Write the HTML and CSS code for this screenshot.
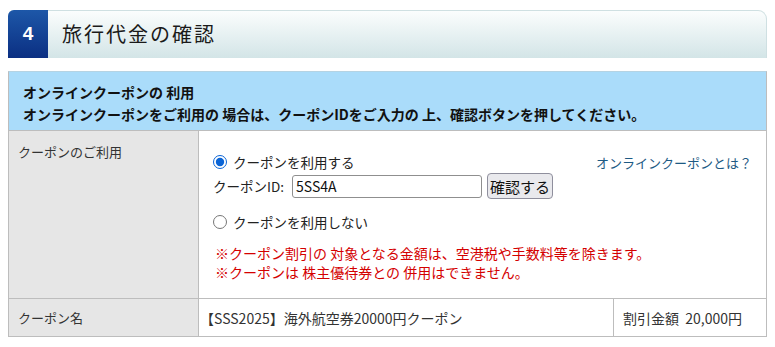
FILE: index.html
```html
<!DOCTYPE html>
<html lang="ja">
<head>
<meta charset="utf-8">
<link rel="stylesheet" href="styles.css">
</head>
<body>
<div class="sec-head">
  <div class="sec-num">4</div>
  <div class="sec-title">旅行代金の確認</div>
</div>
<div class="panel">
  <div class="notice">
    <div>オンラインクーポンの 利用</div>
    <div>オンラインクーポンをご利用の 場合は、クーポンIDをご入力の 上、確認ボタンを押してください。</div>
  </div>
  <div class="row row-use">
    <div class="label">クーポンのご利用</div>
    <div class="body">
      <div class="line-top">
        <label class="radio"><input type="radio" name="c" checked> クーポンを利用する</label>
        <a class="help" href="#">オンラインクーポンとは？</a>
      </div>
      <div class="id-line">
        <span class="id-label">クーポンID:</span>
        <input class="id-input" type="text" value="5SS4A">
        <button class="confirm">確認する</button>
      </div>
      <label class="radio radio2"><input type="radio" name="c"> クーポンを利用しない</label>
      <div class="notes">
        <div>※クーポン割引の 対象となる金額は、空港税や手数料等を除きます。</div>
        <div>※クーポンは 株主優待券との 併用はできません。</div>
      </div>
    </div>
  </div>
  <div class="row row-name">
    <div class="label">クーポン名</div>
    <div class="name">【SSS2025】海外航空券20000円クーポン</div>
    <div class="amount">割引金額&nbsp;&nbsp;20,000円</div>
  </div>
</div>
</body>
</html>
```
FILE: styles.css
```css
* { box-sizing: border-box; }
body {
  margin: 10px 8px 0 8px;
  font-family: "Noto Sans CJK JP", "Noto Sans", sans-serif;
  color: #222;
  background: #fff;
}
.sec-head {
  display: flex;
  height: 48px;
  width: 759px;
  border: 1px solid #cfe0e2;
  border-left: none;
  border-bottom: none;
  border-radius: 6px 9px 0 0;
  background: linear-gradient(#fbfdfd, #d3e5e7);
}
.sec-num {
  width: 40px;
  margin-top: -1px;
  height: 48px;
  background: linear-gradient(#1d57a8, #0b2f82);
  border-radius: 6px 0 0 0;
  color: #fff;
  font-family: "Liberation Sans", Arial, sans-serif;
  font-weight: bold;
  font-size: 19px;
  display: flex;
  align-items: center;
  justify-content: center;
}
.sec-title {
  padding-left: 14px;
  font-size: 20px;
  line-height: 46px;
  letter-spacing: 2px;
  color: #1a1a1a;
}
.panel {
  margin-top: 13px;
  width: 759px;
  border: 1px solid #bdbdbd;
  border-top-color: #b5d3e3;
}
.notice {
  background: #aadcfa;
  border-bottom: 1px solid #bdbdbd;
  padding: 9px 14px 0 14px;
  height: 59px;
  font-size: 14px;
  font-weight: bold;
  line-height: 22px;
  color: #111;
}
.row {
  display: flex;
}
.label {
  width: 190px;
  flex: none;
  background: #e6e6e6;
  border-right: 1px solid #bdbdbd;
  padding-left: 9px;
  font-size: 13px;
  color: #333;
}
.row-use { height: 168px; border-bottom: 1px solid #bdbdbd; }
.row-use .label { padding-top: 11px; }
.body {
  flex: 1;
  padding: 19px 14px 0 14px;
  font-size: 13.5px;
  color: #222;
}
.line-top {
  display: flex;
  justify-content: space-between;
  align-items: center;
  height: 24px;
}
.radio {
  display: flex;
  align-items: center;
  gap: 3px;
}
.radio input {
  margin: 0 3px 0 0;
  width: 14px;
  height: 14px;
  accent-color: #0a64d6;
}
.help {
  color: #1d5a84;
  text-decoration: none;
  font-size: 13px;
  margin-right: 0;
}
.id-line {
  display: flex;
  align-items: center;
  height: 26px;
  margin-top: -1px;
}
.id-label { width: 79px; }
.id-input {
  width: 190px;
  height: 23px;
  border: 1px solid #8f8f8f;
  border-radius: 3px;
  padding: 0 3px;
  font-family: "Noto Sans CJK JP", sans-serif;
  font-size: 14px;
  color: #111;
}
.confirm {
  margin-left: 5px;
  width: 66px;
  height: 26px;
  border: 1px solid #8f8f9d;
  border-radius: 4px;
  background: #e9e9ed;
  font-family: "Noto Sans CJK JP", sans-serif;
  font-size: 15px;
  padding: 0;
  color: #111;
}
.radio2 { margin-top: 12px; height: 22px; }
.notes {
  margin-top: 11px;
  padding-left: 2px;
  color: #d40000;
  font-size: 14px;
  line-height: 19px;
}
.row-name { height: 37px; align-items: stretch; font-size: 14px; color: #333; }
.row-name .label { display: flex; align-items: center; font-size: 13px; }
.name {
  flex: 1;
  display: flex;
  align-items: center;
  padding-left: 1px;
  border-right: 1px solid #bdbdbd;
}
.amount {
  width: 152px;
  display: flex;
  align-items: center;
  padding-left: 9px;
}
```
